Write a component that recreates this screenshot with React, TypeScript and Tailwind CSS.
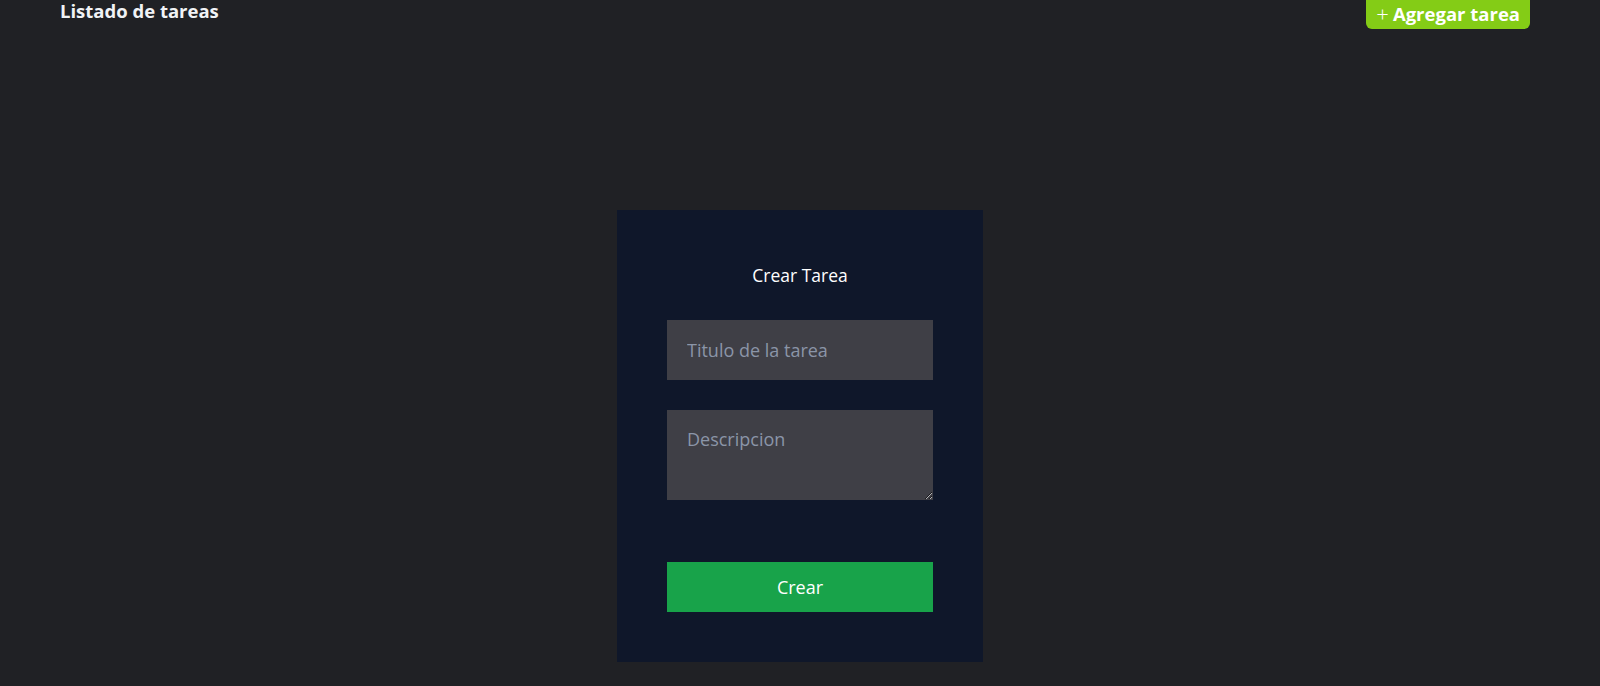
import { useState } from "react";

export default function App() {
  // form state
  const [titulo, setTitulo] = useState("");
  const [descripcion, setDescripcion] = useState("");

  return (
    <div
      className="h-[686px] overflow-hidden bg-[#202125] text-white"
      style={{ fontFamily: '"Open Sans", "Noto Sans", sans-serif' }}
    >
      {/* Header */}
      <header className="flex items-start justify-between px-[60px]">
        <h1 className="text-[18.5px] font-bold leading-[22px] text-[#f1f3f6]">
          Listado de tareas
        </h1>
        <button className="mr-[10px] flex items-center gap-1 rounded-b-md bg-[#84cc16] px-[10px] pb-[3px] pt-[1px] text-[18.5px] font-bold leading-[25px] text-white">
          <span className="text-[22px] font-light leading-[25px]">+</span>
          Agregar tarea
        </button>
      </header>

      {/* Form card */}
      <div className="mt-[181px] flex justify-center">
        <form
          className="flex w-[366px] flex-col bg-[#0f172a] px-[50px] pb-[50px] pt-[53px]"
          onSubmit={(e) => e.preventDefault()}
        >
          <h2 className="text-center text-[17.5px] leading-[24px]">Crear Tarea</h2>
          <input
            className="mt-[33px] h-[60px] w-full bg-[#3f3f46] px-[20px] text-[18px] text-white outline-none placeholder:text-[#8b95a8]"
            placeholder="Titulo de la tarea"
            value={titulo}
            onChange={(e) => setTitulo(e.target.value)}
          />
          <textarea
            className="mt-[30px] block h-[90px] w-full bg-[#3f3f46] px-[20px] pt-[16px] text-[18px] text-white outline-none placeholder:text-[#8b95a8]"
            placeholder="Descripcion"
            value={descripcion}
            onChange={(e) => setDescripcion(e.target.value)}
          />
          <button
            type="submit"
            className="mt-[62px] h-[50px] w-full bg-[#18a34a] text-[18px] text-white"
          >
            Crear
          </button>
        </form>
      </div>
    </div>
  );
}
